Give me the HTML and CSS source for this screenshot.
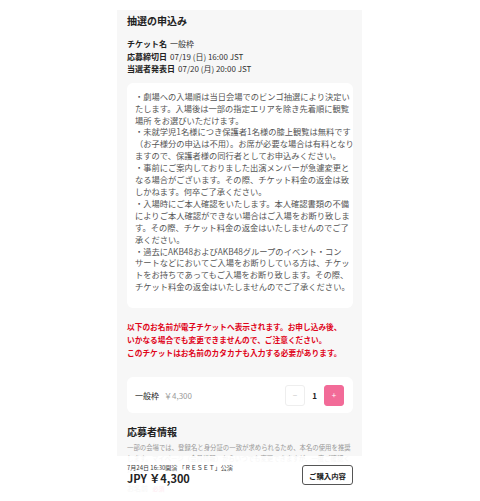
FILE: index.html
```html
<!DOCTYPE html>
<html lang="ja">
<head>
<meta charset="utf-8">
<title>抽選の申込み</title>
<link rel="stylesheet" href="styles.css">
</head>
<body>
<div class="page">
  <main class="sheet">
    <h1 class="title">抽選の申込み</h1>
    <dl class="meta">
      <div class="meta-row"><dt>チケット名</dt><dd>一般枠</dd></div>
      <div class="meta-row"><dt>応募締切日</dt><dd>07/19 (日) 16:00 JST</dd></div>
      <div class="meta-row"><dt>当選者発表日</dt><dd>07/20 (月) 20:00 JST</dd></div>
    </dl>
    <div class="notice-card">
      <p>・劇場への入場順は当日会場でのビンゴ抽選により決定い<br>たします。入場後は一部の指定エリアを除き先着順に観覧<br>場所 をお選びいただけます。</p>
      <p>・未就学児1名様につき保護者1名様の膝上観覧は無料です<br>（お子様分の申込は不用）。お席が必要な場合は有料となり<br>ますので、保護者様の同行者としてお申込みください。</p>
      <p>・事前にご案内しておりました出演メンバーが急遽変更と<br>なる場合がございます。その際、チケット料金の返金は致<br>しかねます。何卒ご了承ください。</p>
      <p>・入場時にご本人確認をいたします。本人確認書類の不備<br>によりご本人確認ができない場合はご入場をお断り致しま<br>す。その際、チケット料金の返金はいたしませんのでご了<br>承ください。</p>
      <p>・過去にAKB48およびAKB48グループのイベント・コン<br>サートなどにおいてご入場をお断りしている方は、チケッ<br>トをお持ちであってもご入場をお断り致します。その際、<br>チケット料金の返金はいたしませんのでご了承ください。</p>
    </div>
    <p class="warning">以下のお名前が電子チケットへ表示されます。お申し込み後、<br>いかなる場合でも変更できませんので、ご注意ください。<br>このチケットはお名前のカタカナも入力する必要があります。</p>
    <div class="ticket-row">
      <div class="ticket-name"><span>一般枠</span><span class="price">￥4,300</span></div>
      <div class="stepper">
        <button class="step">−</button>
        <span class="qty">1</span>
        <button class="step step-plus">+</button>
      </div>
    </div>
    <h2 class="section-title">応募者情報</h2>
    <p class="section-desc">一部の会場では、登録名と身分証の一致が求められるため、本名の使用を推奨します。マイページ（会員情報）からいつでも変更できますが、一度ご確認ください。</p>
    <div class="field-label">お名前 <span class="req">必須</span></div>
  </main>
  <footer class="buy-bar">
    <div class="buy-info">
      <div class="show-date">7月24日 16:30開演 「ＲＥＳＥＴ」公演</div>
      <div class="total">JPY ￥4,300</div>
    </div>
    <button class="btn-outline">ご購入内容</button>
  </footer>
</div>
</body>
</html>
```

FILE: styles.css
```css
html, body {
  margin: 0;
  padding: 0;
  background: #ffffff;
}

body {
  font-family: "Noto Sans CJK JP", "Noto Sans", sans-serif;
  color: #222222;
  overflow: hidden;
  height: 501px;
}

.page {
  position: relative;
  width: 245px;
  margin-left: 117px;
  padding-top: 10px;
  height: 491px;
}

.sheet {
  background: #f7f7f7;
  height: 100%;
  box-sizing: border-box;
  padding: 4px 9px 0 10px;
  overflow: hidden;
}

.title {
  margin: 0;
  font-size: 10px;
  line-height: 14px;
  font-weight: 700;
}

.meta {
  margin: 10px 0 0;
  font-size: 8px;
  line-height: 12.5px;
}

.meta-row {
  display: flex;
  gap: 3px;
}

.meta-row dt {
  font-weight: 700;
}

.meta-row dd {
  margin: 0;
  color: #333333;
}

.notice-card {
  margin-top: 7.5px;
  background: #ffffff;
  border-radius: 6px;
  padding: 7.75px 0 15px 8px;
  font-size: 8.27px;
  line-height: 11.9px;
  color: #555555;
  white-space: nowrap;
  overflow: hidden;
}

.notice-card p {
  margin: 0;
}

.warning {
  margin: 11.5px 0 0;
  color: #e0061b;
  font-weight: 700;
  font-size: 7.7px;
  line-height: 13px;
}

.ticket-row {
  margin-top: 18.5px;
  height: 36px;
  background: #ffffff;
  border-radius: 6px;
  display: flex;
  align-items: center;
  justify-content: space-between;
  padding: 0 9px 0 8px;
  box-sizing: border-box;
}

.ticket-name {
  display: flex;
  gap: 5px;
  font-size: 8px;
}

.price {
  color: #999999;
}

.stepper {
  display: flex;
  align-items: center;
}

.step {
  width: 20px;
  height: 21px;
  padding: 0;
  border: 1px solid #eeeeee;
  border-radius: 3px;
  background: #ffffff;
  color: #c8c8c8;
  font-family: inherit;
  font-size: 8px;
  line-height: 1;
}

.step-plus {
  background: #f26b98;
  border-color: #f26b98;
  color: #ffffff;
}

.qty {
  width: 19px;
  text-align: center;
  font-size: 8px;
  font-weight: 700;
}

.section-title {
  margin: 12px 0 0;
  font-size: 10px;
  line-height: 14px;
  font-weight: 700;
}

.section-desc {
  margin: 2.5px 0 0;
  font-size: 6.4px;
  line-height: 11px;
  color: #999999;
}

.field-label {
  margin-top: 9px;
  font-size: 7px;
  line-height: 9px;
  font-weight: 700;
  color: #bbbbbb;
}

.req {
  color: #f26b98;
  font-size: 6px;
  margin-left: 3px;
}

.buy-bar {
  position: absolute;
  left: 0;
  right: 0;
  bottom: 0;
  height: 45px;
  box-sizing: border-box;
  padding: 8px 9px 0 10px;
  background: rgba(255, 255, 255, 0.9);
  display: flex;
  justify-content: space-between;
  align-items: flex-start;
}

.show-date {
  font-size: 6px;
  line-height: 8px;
  color: #333333;
}

.total {
  font-size: 11px;
  line-height: 13px;
  font-weight: 700;
}

.btn-outline {
  margin-top: 1px;
  width: 51px;
  height: 20px;
  padding: 0;
  border: 1px solid #555555;
  border-radius: 3px;
  background: #ffffff;
  color: #222222;
  font-family: inherit;
  font-size: 7.4px;
  font-weight: 700;
}
```
